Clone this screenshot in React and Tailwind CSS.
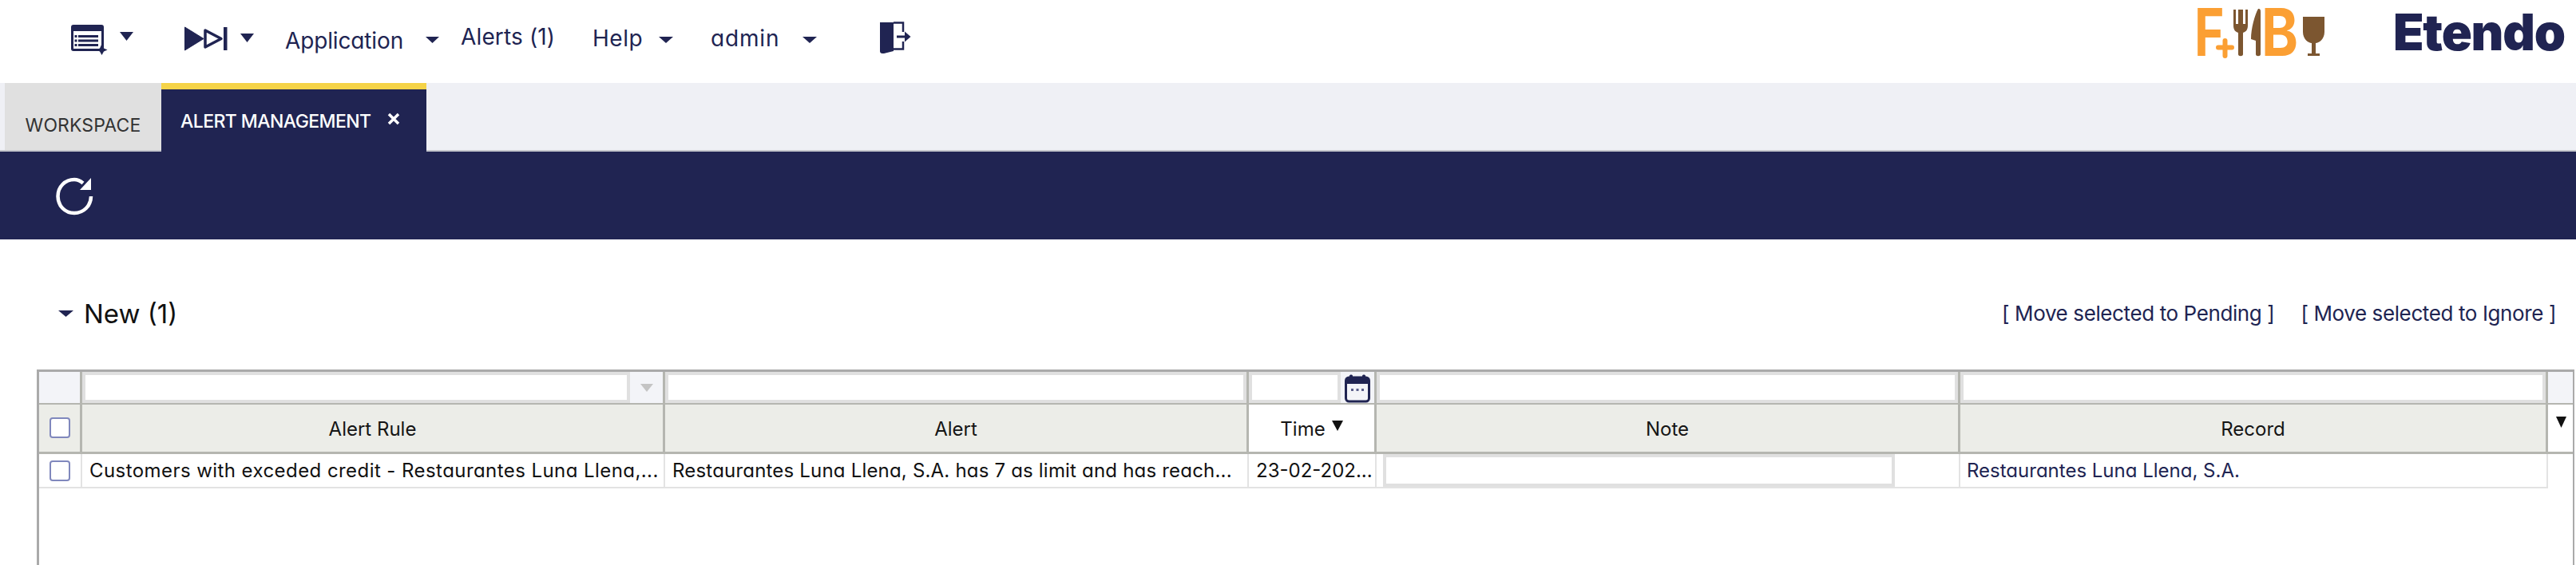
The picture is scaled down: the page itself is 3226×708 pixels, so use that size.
const navy = "#202452";

function Caret({ className = "", color = navy, w = 17, h = 11 }) {
  return (
    <svg width={w} height={h} viewBox="0 0 17 11" preserveAspectRatio="none" className={"shrink-0 " + className}>
      <path d="M0 0H17L8.500 11Z" fill={color} />
    </svg>
  );
}

function FormIcon() {
  return (
    <svg width="46" height="38" viewBox="0 0 46 38" fill="none">
      <rect x="1.500" y="1.500" width="38" height="30" rx="1.500" stroke={navy} strokeWidth="3" />
      <rect x="1" y="1" width="39" height="7" fill={navy} />
      <rect x="9" y="13" width="25" height="3" fill={navy} />
      <rect x="9" y="18.500" width="25" height="3" fill={navy} />
      <rect x="9" y="24" width="25" height="3" fill={navy} />
      <rect x="4.500" y="13" width="3" height="3" fill={navy} />
      <rect x="4.500" y="18.500" width="3" height="3" fill={navy} />
      <rect x="4.500" y="24" width="3" height="3" fill={navy} />
      <path d="M38.500 24L41 29.500L45.500 31.500L41 33.500L38.500 38L36 33.500L31.500 31.500L36 29.500Z" fill={navy} />
    </svg>
  );
}

function SkipIcon() {
  return (
    <svg width="54" height="31" viewBox="0 0 54 31" fill="none">
      <path d="M0.500 1L24 15.500L0.500 30Z" fill={navy} stroke={navy} strokeLinejoin="round" strokeWidth="1" />
      <path d="M26 5L46 15.500L26 26Z" stroke={navy} strokeWidth="3.500" strokeLinejoin="round" />
      <rect x="49" y="1" width="4.500" height="29" fill={navy} />
    </svg>
  );
}

function ExitIcon() {
  return (
    <svg width="39" height="41" viewBox="0 0 39 41" fill="none">
      <path d="M0 1H17V37L5 40H3C1 40 0 39 0 37Z" fill={navy} />
      <path d="M17 1.500H29V13M29 25V34.500H17" stroke={navy} strokeWidth="2.500" />
      <path d="M21 17.500H31V12.500L38.500 19L31 25.500V20.500H21Z" fill={navy} />
    </svg>
  );
}

function RefreshIcon() {
  return (
    <svg width="48" height="48" viewBox="0 0 48 48" fill="none">
      <path d="M35 7.500C31.500 4.500 28 3 24 3C12.500 3 3.500 12 3.500 24C3.500 36 12.500 45 24 45C35.500 45 45 36 45 24" stroke="#fff" strokeWidth="4.500" />
      <path d="M45 1V16H31Z" fill="#fff" />
    </svg>
  );
}

function CalendarIcon() {
  return (
    <svg width="32" height="36" viewBox="0 0 32 36" fill="none">
      <rect x="1.500" y="4" width="29" height="30" rx="4" fill="#f3f4f8" stroke={navy} strokeWidth="3" />
      <path d="M1.500 8C1.500 5.500 3 4 5 4H27C29 4 30.500 5.500 30.500 8V12H1.500Z" fill={navy} />
      <rect x="6" y="0.500" width="4" height="6" rx="1.500" fill={navy} />
      <rect x="22" y="0.500" width="4" height="6" rx="1.500" fill={navy} />
      <rect x="8" y="18" width="3" height="3" fill="#5b5f8a" />
      <rect x="14.500" y="18" width="3" height="3" fill="#5b5f8a" />
      <rect x="21" y="18" width="3" height="3" fill="#5b5f8a" />
    </svg>
  );
}

function FBLogo() {
  return (
    <svg width="180" height="100" viewBox="-10 -30 180 100" fill="none">
      <text transform="translate(-5 60) scale(0.78 1)" fontFamily="Inter" fontWeight="700" fontSize="82" fill="#fb9f33">F</text>
      <path d="M25 49.500H42M33.500 41V60" stroke="#fb9f33" strokeWidth="6" strokeLinecap="round" />
      <path d="M44 2V22C44 28 47 30 50 31V58C50 61 56 61 56 58V31C59 30 62 28 62 22V2H59V20H56V2H50V20H47V2Z" fill="#7c5630" />
      <path d="M72 41L66 39C66 25 71 8 75 1C78 1 78 3 78 5V58C78 61 72 61 72 58Z" fill="#7c5630" />
      <text transform="translate(79 60) scale(0.85 1)" fontFamily="Inter" fontWeight="700" fontSize="82" fill="#fb9f33">B</text>
      <path d="M131 11H158V30C158 39 151 44 147 44V57H152V60H137V57H142V44C138 44 131 39 131 30Z" fill="#7c5630" />
    </svg>
  );
}

function Box() {
  return <span className="block w-[26px] h-[26px] rounded-[4px] border-2 border-[#8088bd] bg-white box-border" />;
}

function FilterInput({ className = "" }) {
  return <div className={"border-4 border-[#e0e0e0] bg-white box-border " + className} />;
}

const cols = "grid grid-cols-[54px_730px_731px_160px_731px_736px_1fr]";
const font = "font-['Inter',sans-serif] [font-feature-settings:'cv11']";

export default function App() {
  return (
    <div className={"w-[3226px] h-[708px] overflow-hidden bg-white relative " + font}>
      <header className="h-[104px] flex items-start text-[28px] leading-[40px] text-[#202452]">
        <div className="ml-[89px] mt-[31px]"><FormIcon /></div>
        <Caret className="ml-[15px] mt-[40px]" />
        <div className="ml-[64px] mt-[33px]"><SkipIcon /></div>
        <Caret className="ml-[16px] mt-[42px]" />
        <span className="ml-[39px] mt-[31px] w-[148px] whitespace-nowrap tracking-[-0.005em]">Application</span>
        <Caret className="ml-[28px] mt-[46px]" h={8} />
        <span className="ml-[27px] mt-[26px] w-[117px] whitespace-nowrap tracking-[0.005em]">Alerts (1)</span>
        <span className="ml-[48px] mt-[28px] w-[61px] whitespace-nowrap tracking-[0.02em]">Help</span>
        <Caret className="ml-[22px] mt-[46px]" w={18} h={8} />
        <span className="ml-[47px] mt-[28px] w-[91px] whitespace-nowrap tracking-[0.03em]">admin</span>
        <Caret className="ml-[24px] mt-[46px]" w={18} h={8} />
        <div className="ml-[79px] mt-[27px]"><ExitIcon /></div>
        <div className="ml-auto -mt-[20px] h-[100px]"><FBLogo /></div>
        <span className="ml-[74px] mr-[22px] w-[207px] text-[63px] leading-[80px] font-black tracking-[-0.02em] whitespace-nowrap">Etendo</span>
      </header>

      <div className="h-[86px] bg-[#eff0f5] border-b-2 border-b-[#c4c6cc] flex items-stretch pl-[6px] box-border">
        <div className="w-[196px] h-[84px] bg-[#e0e0e0] text-[#333] text-[23px] flex items-center justify-center pt-[22px] box-border tracking-[0.005em]">
          WORKSPACE
        </div>
        <div className="w-[332px] h-[86px] bg-[#202452] border-t-[8px] border-t-[#f5d348] text-white text-[23px] font-medium flex items-start pl-[24px] pt-[23px] box-border">
          <span className="whitespace-nowrap tracking-[-0.025em]">ALERT MANAGEMENT</span>
          <svg width="16" height="16" viewBox="0 0 16 16" className="ml-auto mr-[33px] mt-[6px]">
            <path d="M2 2L14 14M14 2L2 14" stroke="#fff" strokeWidth="3.500" />
          </svg>
        </div>
      </div>

      <div className="h-[110px] bg-[#202452] pl-[69px] pt-[32px]">
        <RefreshIcon />
      </div>

      <div className="h-[163px] flex items-start">
        <Caret className="ml-[73px] mt-[89px]" h={8} w={19} />
        <span className="ml-[13px] mt-[73px] text-[33px] leading-[40px] text-[#111] whitespace-nowrap">New (1)</span>
        <span className="ml-auto mt-[75px] text-[26px] leading-[36px] text-[#202452] whitespace-nowrap tracking-[-0.015em]">[ Move selected to Pending ]</span>
        <span className="ml-[33px] mr-[25px] mt-[75px] text-[26px] leading-[36px] text-[#202452] whitespace-nowrap tracking-[-0.015em]">[ Move selected to Ignore ]</span>
      </div>

      <div className="ml-[46px] mr-[2px] h-[246px] border-l-[3px] border-r-[2px] border-t-[3px] border-[#aaaaaa] box-border">
        <div className={cols + " h-[41px] border-b-[3px] border-b-[#b5b6b0] box-border"}>
          <div className="bg-[#f3f4f8] border-r-[3px] border-r-[#b5b6b0]" />
          <div className="flex border-r-[3px] border-r-[#b5b6b0]">
            <FilterInput className="flex-1" />
            <div className="w-[41px] bg-[#f3f4f8] flex items-center justify-center">
              <Caret color="#c4c4c4" w={16} h={10} />
            </div>
          </div>
          <div className="border-r-[3px] border-r-[#b5b6b0]"><FilterInput className="h-full" /></div>
          <div className="flex border-r-[3px] border-r-[#b5b6b0]">
            <FilterInput className="flex-1" />
            <div className="w-[42px] bg-[#f3f4f8] flex items-start justify-center pt-[3px]"><CalendarIcon /></div>
          </div>
          <div className="border-r-[3px] border-r-[#b5b6b0]"><FilterInput className="h-full" /></div>
          <div className="border-r-[3px] border-r-[#b5b6b0]"><FilterInput className="h-full" /></div>
          <div className="bg-[#f3f4f8]" />
        </div>

        <div className={cols + " h-[62px] border-b-[3px] border-b-[#b5b6b0] box-border text-[24px] text-[#151515]"}>
          <div className="bg-[#ecede8] border-r-[3px] border-r-[#b5b6b0] flex items-center justify-center pb-[2px]"><Box /></div>
          <div className="bg-[#ecede8] border-r-[3px] border-r-[#b5b6b0] flex items-center justify-center pt-[2px]">Alert Rule</div>
          <div className="bg-[#ecede8] border-r-[3px] border-r-[#b5b6b0] flex items-center justify-center pt-[2px]">Alert</div>
          <div className="bg-white border-r-[3px] border-r-[#b5b6b0] flex items-center justify-center gap-[8px] pt-[2px]">
            Time
            <Caret className="mb-[8px]" color="#111" w={14} h={13} />
          </div>
          <div className="bg-[#ecede8] border-r-[3px] border-r-[#b5b6b0] flex items-center justify-center pt-[2px]">Note</div>
          <div className="bg-[#ecede8] border-r-[3px] border-r-[#b5b6b0] flex items-center justify-center pt-[2px]">Record</div>
          <div className="bg-white flex items-start pl-[10px] pt-[15px]"><Caret color="#111" w={13} h={14} /></div>
        </div>

        <div className={cols + " h-[43px] text-[24px] text-[#111]"}>
          <div className="border-r-2 border-b-2 border-[#e3e3e3] flex items-center justify-center box-border"><Box /></div>
          <div className="border-r-2 border-b-2 border-[#e3e3e3] flex items-center pl-[9px] overflow-hidden whitespace-nowrap box-border tracking-[0.018em]">Customers with exceded credit - Restaurantes Luna Llena,...</div>
          <div className="border-r-2 border-b-2 border-[#e3e3e3] flex items-center pl-[9px] overflow-hidden whitespace-nowrap box-border tracking-[0.008em]">Restaurantes Luna Llena, S.A. has 7 as limit and has reach...</div>
          <div className="border-r-2 border-b-2 border-[#e3e3e3] flex items-center pl-[9px] overflow-hidden whitespace-nowrap box-border">23-02-202...</div>
          <div className="border-r-2 border-b-2 border-[#e3e3e3] pl-[8px] pr-[80px] box-border">
            <FilterInput className="h-[41px]" />
          </div>
          <div className="border-r-2 border-b-2 border-[#e3e3e3] flex items-center pl-[8px] text-[#202452] whitespace-nowrap box-border">Restaurantes Luna Llena, S.A.</div>
          <div />
        </div>
      </div>
    </div>
  );
}
